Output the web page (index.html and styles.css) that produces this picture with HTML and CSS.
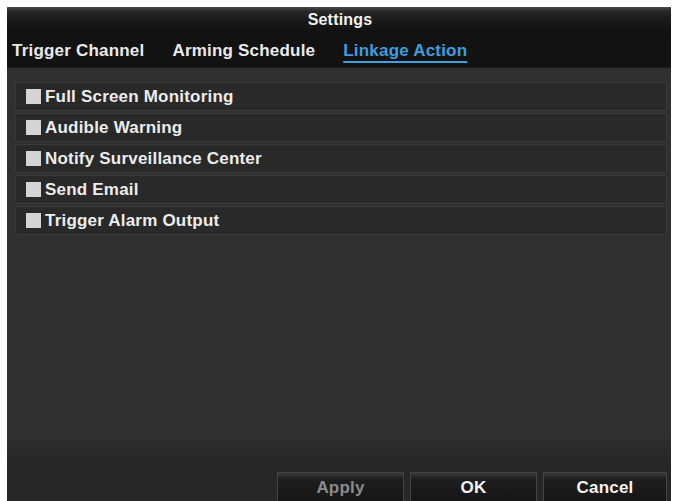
FILE: index.html
```html
<!DOCTYPE html>
<html>
<head>
<meta charset="utf-8">
<link rel="stylesheet" href="styles.css">
</head>
<body>
<div class="window">
  <div class="titlebar">Settings</div>
  <div class="tabs">
    <span class="tab">Trigger Channel</span>
    <span class="tab">Arming Schedule</span>
    <span class="tab active">Linkage Action</span>
  </div>
  <div class="content">
    <div class="row"><span class="check"></span><span class="label">Full Screen Monitoring</span></div>
    <div class="row"><span class="check"></span><span class="label">Audible Warning</span></div>
    <div class="row"><span class="check"></span><span class="label">Notify Surveillance Center</span></div>
    <div class="row"><span class="check"></span><span class="label">Send Email</span></div>
    <div class="row"><span class="check"></span><span class="label">Trigger Alarm Output</span></div>
  </div>
  <div class="footer">
    <button class="btn disabled">Apply</button>
    <button class="btn">OK</button>
    <button class="btn narrow">Cancel</button>
  </div>
</div>
</body>
</html>
```
FILE: styles.css
```css
*, *::before, *::after {
  box-sizing: border-box;
}
html, body {
  margin: 0;
  padding: 0;
  background: #ffffff;
}
body {
  padding: 7px 5px 0 7px;
  font-family: "Liberation Sans", Arial, sans-serif;
  font-weight: bold;
  font-size: 17px;
  letter-spacing: 0.2px;
  color: #ececec;
}
.window {
  width: 664px;
  height: 494px;
  background: #2e2e2e;
  display: flex;
  flex-direction: column;
  overflow: hidden;
  box-shadow: inset 0 0 0 1px #3a3a3a;
}
.titlebar {
  height: 28px;
  flex: none;
  display: flex;
  align-items: center;
  justify-content: center;
  padding: 0 0 2px 2px;
  background: linear-gradient(#4a4a4a 0px, #2a2a2a 4px, #1a1a1a 12px, #101010 28px);
  color: #f2f2f2;
  font-size: 16px;
}
.tabs {
  height: 33px;
  flex: none;
  display: flex;
  align-items: center;
  gap: 28px;
  padding-left: 5px;
  background: #121212;
  border-bottom: 1px solid #1c1c1c;
}
.tab {
  color: #eaeaea;
  padding-bottom: 1px;
}
.tab.active {
  color: #3d9fe0;
  text-decoration: underline;
  text-underline-offset: 5px;
  text-decoration-thickness: 2px;
}
.content {
  flex: 1;
  display: flex;
  flex-direction: column;
  gap: 2px;
  padding: 14px 4px 0 8px;
  background: linear-gradient(#303030 0, #303030 365px, #262626 398px);
}
.row {
  height: 29px;
  display: flex;
  align-items: center;
  background: #292929;
  border: 1px solid #3a3a3a;
  border-radius: 2px;
  padding-left: 10px;
}
.check {
  width: 15px;
  height: 15px;
  background: #d4d4d4;
  margin-right: 4px;
  flex: none;
}
.label {
  color: #ececec;
}
.footer {
  height: 35px;
  flex: none;
  display: flex;
  justify-content: flex-end;
  align-items: flex-start;
  gap: 6px;
  padding: 6px 4px 0 0;
  background: #272727;
}
.btn {
  width: 127px;
  height: 34px;
  font-family: "Liberation Sans", Arial, sans-serif;
  font-weight: bold;
  font-size: 17px;
  letter-spacing: 0.2px;
  color: #f2f2f2;
  background: linear-gradient(#3a3a3a 0, #1e1e1e 6px, #141414 34px);
  border: 1px solid #444444;
  border-bottom: none;
  padding: 5px 0 0 0;
  display: flex;
  justify-content: center;
  align-items: flex-start;
}
.btn.narrow {
  width: 124px;
}
.btn.disabled {
  color: #8a8a8a;
}
```
